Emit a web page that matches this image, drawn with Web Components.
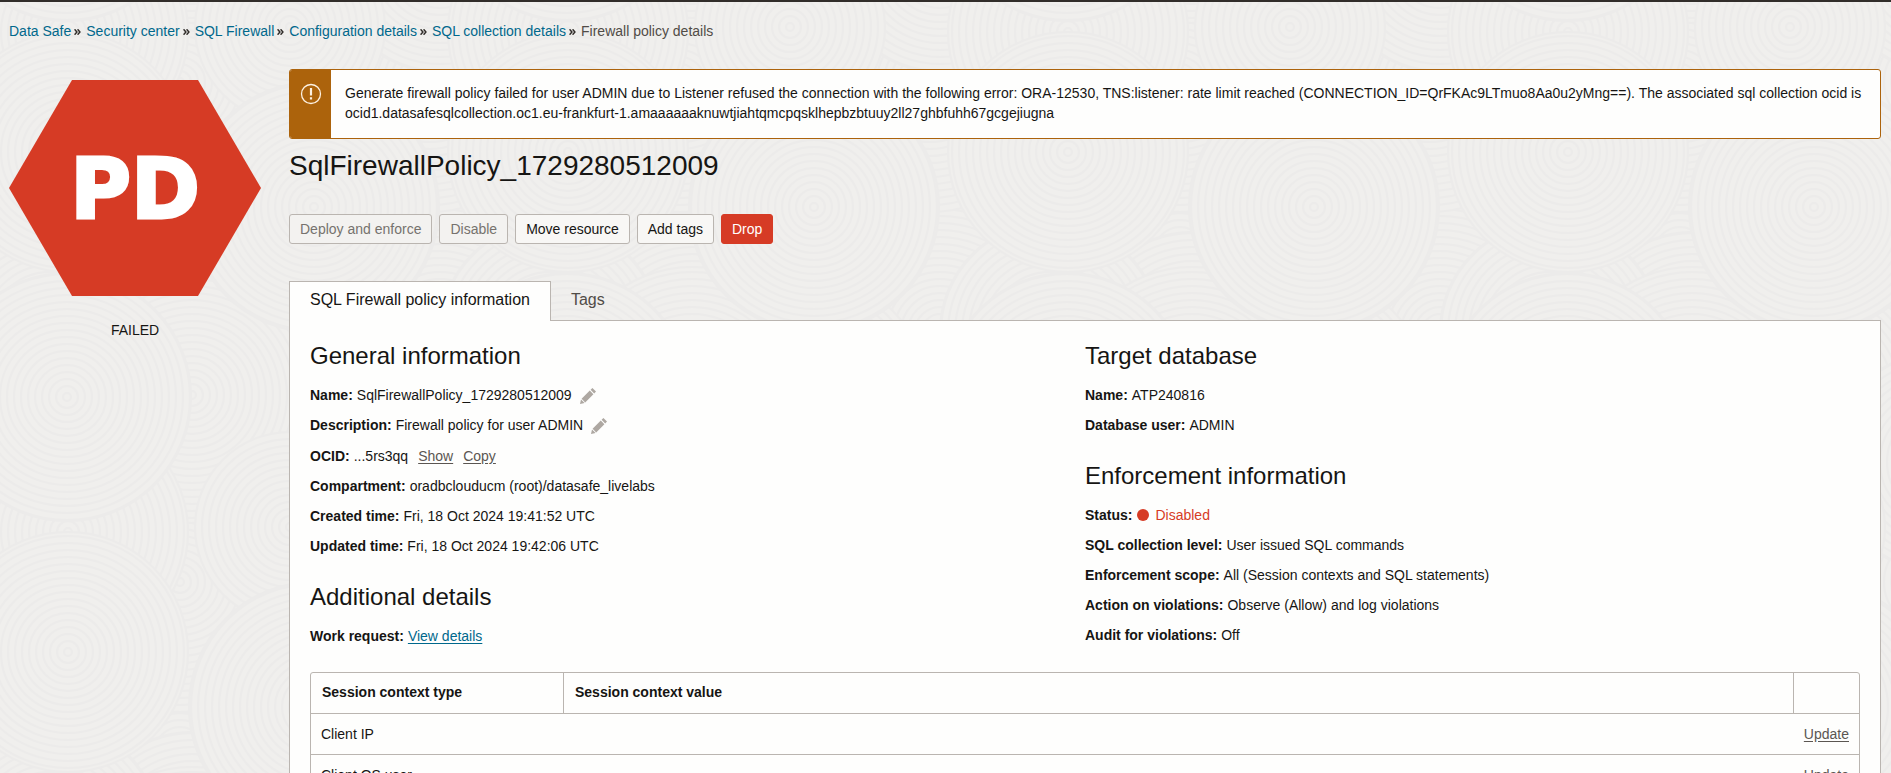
<!DOCTYPE html>
<html lang="en">
<head>
<meta charset="utf-8">
<title>Firewall policy details</title>
<style>
  body { margin: 0; background: #f0efed; color: #161513; font: 14px/20px "Liberation Sans", Arial, sans-serif; }
</style>
</head>
<body>
<policy-page></policy-page>
<script>
const define = (name, html, setup) => customElements.define(name, class extends HTMLElement {
  constructor() {
    super();
    this.attachShadow({ mode: "open" }).innerHTML = html;
  }
  connectedCallback() {
    if (setup) setup(this, this.shadowRoot);
  }
});

/* Faint ripples behind the whole page: overlapping ringed discs on a 500px tile that wraps at its edges */
const TILE = 500;
const rings = (max) => {
  let s = "";
  for (let r = 4; r < max; r += 7) s += `<circle r="${r}"/>`;
  return s;
};
const disc = (x, y, r) => {
  let s = "";
  for (const dx of [-TILE, 0, TILE]) for (const dy of [-TILE, 0, TILE]) {
    const cx = x + dx, cy = y + dy;
    if (cx + r < 0 || cx - r > TILE || cy + r < 0 || cy - r > TILE) continue;
    s += `<g transform="translate(${cx} ${cy})"><circle r="${r}" class="base"/>${rings(r)}</g>`;
  }
  return s;
};
const discs = [[180, 250, 130], [440, 330, 130], [430, 80, 130], [300, 400, 130], [180, 80, 130], [440, 460, 110],
  [192, 340, 110], [50, 330, 110], [192, 393, 128], [290, 25, 95], [68, 30, 120], [67, 395, 124], [314, 205, 125], [68, 150, 120]];
define("page-backdrop", `
<style>
  :host { position: absolute; inset: 0; z-index: -1; overflow: hidden; }
  svg { display: block; width: 100%; height: 100%; }
  circle { fill: none; stroke: #ecebea; stroke-width: 2; }
  .base { fill: #f0efed; }
</style>
<svg aria-hidden="true">
  <defs>
    <pattern id="ripples" width="${TILE}" height="${TILE}" patternUnits="userSpaceOnUse">${discs.map(d => disc(...d)).join("")}</pattern>
  </defs>
  <rect width="100%" height="100%" fill="url(#ripples)"/>
</svg>`);

define("crumb-trail", `
<style>
  :host { display: block; padding: 19px 9px 0; color: #514c47; }
  nav { display: flex; flex-wrap: wrap; }
</style>
<nav aria-label="Breadcrumb"><slot></slot></nav>`);

define("crumb-item", `
<style>
  :host { display: inline-flex; }
  a { color: #00688c; text-decoration: none; }
  svg { width: 7px; height: 6px; margin: 8px 5px 0 3px; }
</style>
<a href="#"><slot></slot></a>
<svg viewBox="0 0 7 6" fill="none" stroke="#312d2a" stroke-width="1.5" aria-hidden="true"><path d="M.6 .3 2.9 3 .6 5.7M3.6 .3 5.9 3 3.6 5.7"/></svg>`);

define("resource-badge", `
<style>
  :host { display: flex; flex-direction: column; gap: 24px; align-items: center; text-align: center; padding-top: 11px; }
  svg { display: block; width: 100%; }
  text { font: 700 83px "DejaVu Sans", sans-serif; fill: #fff; stroke: #fff; stroke-width: 3px; }
</style>
<svg viewBox="0 0 252 216" role="img" aria-label="PD">
  <path d="M0 108 63 0H189L252 108 189 216H63Z" fill="#d63b25"/>
  <text x="126" y="138" text-anchor="middle">PD</text>
</svg>
<div><slot></slot></div>`);

define("alert-banner", `
<style>
  :host { display: flex; border: 1px solid #ac630c; border-radius: 3px; background: #fefefd; overflow: hidden; }
  .side { flex: none; width: 41px; background: #ac630c; display: flex; justify-content: center; padding-top: 13px; box-sizing: border-box; }
  svg { width: 22px; height: 22px; }
  .text { padding: 13px 15px 15px 14px; }
</style>
<div class="side"><svg viewBox="0 0 22 22" fill="none" stroke="#fdf1e2" aria-hidden="true"><circle cx="11" cy="11" r="9.5" stroke-width="1.3"/><path d="M11 5v7.5M11 14.2v2.2" stroke-width="2.2"/></svg></div>
<div class="text" role="alert"><slot></slot></div>`);

define("action-button", `
<style>
  :host { display: block; }
  button { font: inherit; line-height: 20px; padding: 4px 10px; border: 1px solid #bab5b0; border-radius: 3px; background: #f8f7f5; color: #161513; display: block; }
  button:disabled { color: #76726e; background: #f3f2f0; }
  :host([danger]) button { background: #d63b25; border-color: #d63b25; color: #fff; }
</style>
<button type="button"><slot></slot></button>`,
(host, root) => { root.querySelector("button").disabled = host.hasAttribute("disabled"); });

define("detail-section", `
<style>
  :host { display: block; }
  h2 { margin: 0 0 8px; font-size: 24px; line-height: 32px; font-weight: 400; }
</style>
<section><h2><slot name="title"></slot></h2><slot></slot></section>`);

define("detail-row", `
<style>
  :host { display: flex; gap: 4px; height: 20px; padding: 5px 0; }
  :host([actions]) { padding-top: 6px; }
  b { font-weight: 700; }
</style>
<b><slot name="label"></slot></b><span><slot></slot></span><slot name="extra"></slot>`);

define("edit-button", `
<style>
  :host { display: block; }
  button { display: block; border: 0; background: none; padding: 3px 4px 0; }
  svg { display: block; width: 16px; height: 16px; }
</style>
<button type="button" aria-label="Edit"><svg viewBox="0 0 16 16" fill="#aea8a2"><path d="M0 16 1 11.4 4.6 15ZM1.6 10.8 9.8 2.6 13.4 6.2 5.2 14.4ZM10.6 1.8 12.4 0 16 3.6 14.2 5.4Z"/></svg></button>`);

define("status-dot", `
<style>
  :host { display: flex; align-items: center; gap: 6px; padding-left: 1px; color: #d63b25; }
  i { width: 12px; height: 12px; border-radius: 50%; background: #d63b25; }
</style>
<i></i><slot></slot>`);

define("text-link", `
<style>
  :host { display: inline; }
  a { color: #5b5652; text-decoration: underline; text-underline-offset: 2px; }
  :host([primary]) a { color: #00688c; }
</style>
<a href="#"><slot></slot></a>`);

define("context-table", `
<style>
  :host { display: block; border: 1px solid #bab5b0; border-radius: 3px; }
  table { width: 100%; border-collapse: collapse; table-layout: fixed; }
  th, td { padding: 10px; height: 20px; text-align: left; font-weight: 400; }
  th { font-weight: 700; padding: 9px 11px 11px; }
  th + th, th + td { border-left: 1px solid #bab5b0; }
  tbody tr { border-top: 1px solid #bab5b0; }
  .type { width: 230px; }
  .act { width: 45px; }
  td:last-child { text-align: right; }
</style>
<table>
  <thead><tr><th class="type" scope="col">Session context type</th><th scope="col">Session context value</th><td class="act"></td></tr></thead>
  <tbody>
    <tr><td>Client IP</td><td></td><td><text-link>Update</text-link></td></tr>
    <tr><td>Client OS user</td><td></td><td><text-link>Update</text-link></td></tr>
  </tbody>
</table>`);

define("tab-strip", `
<style>
  :host { display: flex; }
  button { font: inherit; font-size: 16px; line-height: 20px; color: #514c47; background: none; border: 0; padding: 9px 20px 10px; }
  .on { color: #161513; background: #fefefd; border: 1px solid #bab5b0; border-bottom: 0; padding: 8px 20px 11px; position: relative; margin-bottom: -1px; }
</style>
<button type="button" class="on" role="tab" aria-selected="true">SQL Firewall policy information</button>
<button type="button" role="tab" aria-selected="false">Tags</button>`);

define("policy-page", `
<style>
  :host { display: block; position: relative; height: 100vh; overflow: hidden; border-top: 2px solid #312d2a; box-sizing: border-box; z-index: 0; }
  .layout { display: grid; grid-template-columns: 252px minmax(0, 1fr); gap: 28px; padding: 28px 10px 0 9px; }
  h1 { margin: 9px 0 30px; font-size: 28px; line-height: 36px; font-weight: 400; }
  .actions { display: flex; gap: 7px; margin-bottom: 37px; }
  .panel { background: #fefefd; border: 1px solid #bab5b0; padding: 19px 20px; }
  .cols { display: grid; grid-template-columns: 1fr 1fr; margin-bottom: 21px; }
  .stack { display: flex; flex-direction: column; gap: 20px; }
  .links { display: flex; gap: 10px; margin-left: 6px; }
</style>
<page-backdrop></page-backdrop>
<crumb-trail><crumb-item>Data Safe</crumb-item><crumb-item>Security center</crumb-item><crumb-item>SQL Firewall</crumb-item><crumb-item>Configuration details</crumb-item><crumb-item>SQL collection details</crumb-item><span>Firewall policy details</span></crumb-trail>
<div class="layout">
  <aside><resource-badge>FAILED</resource-badge></aside>
  <main>
    <alert-banner>Generate firewall policy failed for user ADMIN due to Listener refused the connection with the following error: ORA-12530, TNS:listener: rate limit reached (CONNECTION_ID=QrFKAc9LTmuo8Aa0u2yMng==). The associated sql collection ocid is ocid1.datasafesqlcollection.oc1.eu-frankfurt-1.amaaaaaaknuwtjiahtqmcpqsklhepbzbtuuy2ll27ghbfuhh67gcgejiugna</alert-banner>
    <h1>SqlFirewallPolicy_1729280512009</h1>
    <div class="actions">
      <action-button disabled>Deploy and enforce</action-button>
      <action-button disabled>Disable</action-button>
      <action-button>Move resource</action-button>
      <action-button>Add tags</action-button>
      <action-button danger>Drop</action-button>
    </div>
    <tab-strip></tab-strip>
    <div class="panel">
      <div class="cols">
        <div class="stack">
          <detail-section><span slot="title">General information</span>
            <detail-row><span slot="label">Name:</span>SqlFirewallPolicy_1729280512009<edit-button slot="extra"></edit-button></detail-row>
            <detail-row><span slot="label">Description:</span>Firewall policy for user ADMIN<edit-button slot="extra"></edit-button></detail-row>
            <detail-row actions><span slot="label">OCID:</span>...5rs3qq<div slot="extra" class="links"><text-link>Show</text-link><text-link>Copy</text-link></div></detail-row>
            <detail-row><span slot="label">Compartment:</span>oradbclouducm (root)/datasafe_livelabs</detail-row>
            <detail-row><span slot="label">Created time:</span>Fri, 18 Oct 2024 19:41:52 UTC</detail-row>
            <detail-row><span slot="label">Updated time:</span>Fri, 18 Oct 2024 19:42:06 UTC</detail-row>
          </detail-section>
          <detail-section><span slot="title">Additional details</span>
            <detail-row><span slot="label">Work request:</span><text-link primary>View details</text-link></detail-row>
          </detail-section>
        </div>
        <div class="stack">
          <detail-section><span slot="title">Target database</span>
            <detail-row><span slot="label">Name:</span>ATP240816</detail-row>
            <detail-row><span slot="label">Database user:</span>ADMIN</detail-row>
          </detail-section>
          <detail-section><span slot="title">Enforcement information</span>
            <detail-row><span slot="label">Status:</span><status-dot>Disabled</status-dot></detail-row>
            <detail-row><span slot="label">SQL collection level:</span>User issued SQL commands</detail-row>
            <detail-row><span slot="label">Enforcement scope:</span>All (Session contexts and SQL statements)</detail-row>
            <detail-row><span slot="label">Action on violations:</span>Observe (Allow) and log violations</detail-row>
            <detail-row><span slot="label">Audit for violations:</span>Off</detail-row>
          </detail-section>
        </div>
      </div>
      <context-table></context-table>
    </div>
  </main>
</div>`);
</script>
</body>
</html>
